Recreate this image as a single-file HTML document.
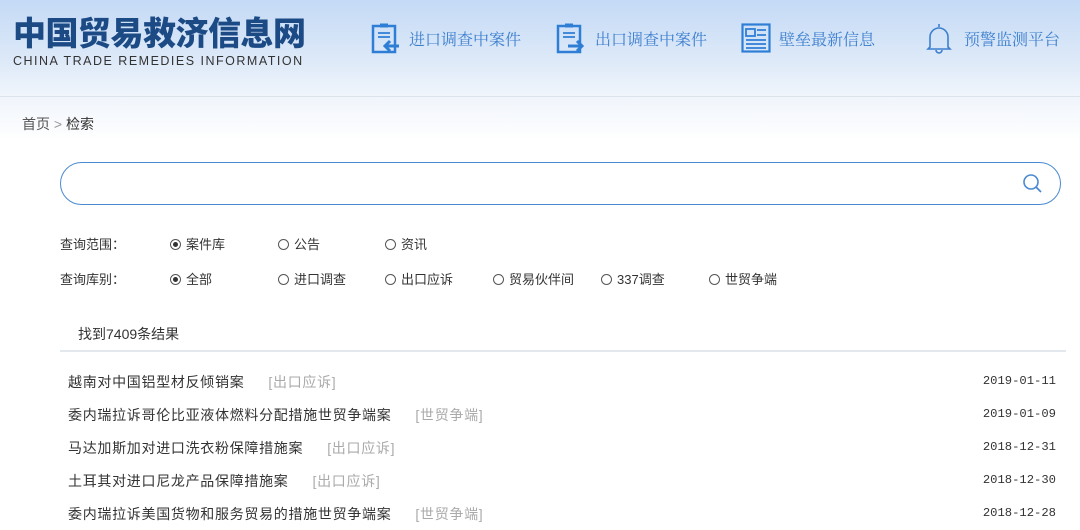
<!DOCTYPE html>
<html><head><meta charset="utf-8"><style>
*{margin:0;padding:0;box-sizing:border-box}
body{width:1080px;height:530px;overflow:hidden;background:#fff;position:relative;font-family:"Liberation Sans","Noto Sans CJK SC",sans-serif;color:#333}
.a{position:absolute;white-space:nowrap}
.hdr{position:absolute;left:0;top:0;width:1080px;height:140px;background:linear-gradient(#c4daf6 0px,#dde9f8 60px,#f0f5fc 96px,#fbfcfe 130px,#fff 140px)}
.nav{font-size:16px;color:#3d7fcf;top:27px;font-family:"Noto Serif CJK SC",serif}
.r{font-size:13px;color:#333}
.rad{display:inline-block;width:11px;height:11px;border:1px solid #555;border-radius:50%;vertical-align:-1px;margin-right:5px;position:relative}
.rad.on::after{content:"";position:absolute;left:2px;top:2px;width:5px;height:5px;border-radius:50%;background:#333}
.it{font-size:14px;color:#333;left:68px;letter-spacing:0.7px}
.it span{color:#aaa;margin-left:24px}
.d{font-size:12.2px;color:#333;right:24px;font-family:"Liberation Mono","Noto Sans CJK SC",monospace}
</style></head><body>
<div class="hdr"></div>
<div class="a" style="left:13px;top:11px;font-size:33px;font-weight:900;color:#1b4a85;letter-spacing:-0.5px;font-family:'Noto Sans CJK SC',sans-serif;line-height:40px">中国贸易救济信息网</div>
<div class="a" style="left:13px;top:54px;font-size:12.5px;color:#333;letter-spacing:1.5px">CHINA TRADE REMEDIES INFORMATION</div>

<svg class="a" style="left:371px;top:22px" width="30" height="32" viewBox="0 0 30 32"><rect x="2" y="4" width="22" height="26" fill="none" stroke="#2f7ed6" stroke-width="2.5"/><rect x="9" y="1.5" width="8" height="4" fill="#2f7ed6"/><path d="M7 11h12M7 15h12" stroke="#2f7ed6" stroke-width="1.8"/><path d="M28 24H14M19 19l-5 5 5 5" fill="none" stroke="#2f7ed6" stroke-width="3"/></svg>
<div class="a nav" style="left:409px">进口调查中案件</div>
<svg class="a" style="left:556px;top:22px" width="30" height="32" viewBox="0 0 30 32"><rect x="2" y="4" width="22" height="26" fill="none" stroke="#2f7ed6" stroke-width="2.5"/><rect x="9" y="1.5" width="8" height="4" fill="#2f7ed6"/><path d="M7 11h12M7 15h12" stroke="#2f7ed6" stroke-width="1.8"/><path d="M12 24h14M21 19l5 5-5 5" fill="none" stroke="#2f7ed6" stroke-width="3"/></svg>
<div class="a nav" style="left:595px">出口调查中案件</div>
<svg class="a" style="left:741px;top:23px" width="30" height="30" viewBox="0 0 30 30"><rect x="1.5" y="1.5" width="27" height="27" fill="none" stroke="#2f7ed6" stroke-width="2.2"/><rect x="5" y="6" width="9" height="7" fill="none" stroke="#2f7ed6" stroke-width="1.8"/><path d="M16 7h9M16 12h9M5 17h20M5 21h20M5 25h20" stroke="#2f7ed6" stroke-width="1.8"/></svg>
<div class="a nav" style="left:779px">壁垒最新信息</div>
<svg class="a" style="left:926px;top:22px" width="26" height="32" viewBox="0 0 26 32"><path d="M13 2v3M4 25V15a9 9 0 0 1 18 0v10l2 2H2z" fill="none" stroke="#3d7fcf" stroke-width="1.6"/><path d="M10 28a3 3 0 0 0 6 0" fill="none" stroke="#3d7fcf" stroke-width="1.6"/></svg>
<div class="a nav" style="left:964px">预警监测平台</div>
<div class="a" style="left:0;top:96px;width:1080px;height:1px;background:#dde3ea"></div>

<div class="a" style="left:22px;top:114px;font-size:14px;color:#555">首页 <span style="color:#999">&gt;</span> <span style="color:#333">检索</span></div>

<div class="a" style="left:60px;top:162px;width:1001px;height:43px;border:1.5px solid #4a8ad0;border-radius:22px;background:#fff"></div>
<svg class="a" style="left:1022px;top:173px" width="22" height="22" viewBox="0 0 22 22"><circle cx="9" cy="9" r="7" fill="none" stroke="#4a8ad0" stroke-width="1.6"/><path d="M14 14l5 5" stroke="#4a8ad0" stroke-width="1.8"/></svg>

<div class="a r" style="left:60px;top:234px">查询范围：</div>
<div class="a r" style="left:170px;top:234px"><i class="rad on"></i>案件库</div>
<div class="a r" style="left:278px;top:234px"><i class="rad"></i>公告</div>
<div class="a r" style="left:385px;top:234px"><i class="rad"></i>资讯</div>
<div class="a r" style="left:60px;top:269px">查询库别：</div>
<div class="a r" style="left:170px;top:269px"><i class="rad on"></i>全部</div>
<div class="a r" style="left:278px;top:269px"><i class="rad"></i>进口调查</div>
<div class="a r" style="left:385px;top:269px"><i class="rad"></i>出口应诉</div>
<div class="a r" style="left:493px;top:269px"><i class="rad"></i>贸易伙伴间</div>
<div class="a r" style="left:601px;top:269px"><i class="rad"></i>337调查</div>
<div class="a r" style="left:709px;top:269px"><i class="rad"></i>世贸争端</div>

<div class="a" style="left:78px;top:324px;font-size:14px;color:#333">找到7409条结果</div>
<div class="a" style="left:60px;top:350px;width:1006px;height:2px;background:#e3e8ee"></div>

<div class="a it" style="top:372px">越南对中国铝型材反倾销案<span>[出口应诉]</span></div><div class="a d" style="top:374px">2019-01-11</div>
<div class="a it" style="top:405px">委内瑞拉诉哥伦比亚液体燃料分配措施世贸争端案<span>[世贸争端]</span></div><div class="a d" style="top:407px">2019-01-09</div>
<div class="a it" style="top:438px">马达加斯加对进口洗衣粉保障措施案<span>[出口应诉]</span></div><div class="a d" style="top:440px">2018-12-31</div>
<div class="a it" style="top:471px">土耳其对进口尼龙产品保障措施案<span>[出口应诉]</span></div><div class="a d" style="top:473px">2018-12-30</div>
<div class="a it" style="top:504px">委内瑞拉诉美国货物和服务贸易的措施世贸争端案<span>[世贸争端]</span></div><div class="a d" style="top:506px">2018-12-28</div>
</body></html>
